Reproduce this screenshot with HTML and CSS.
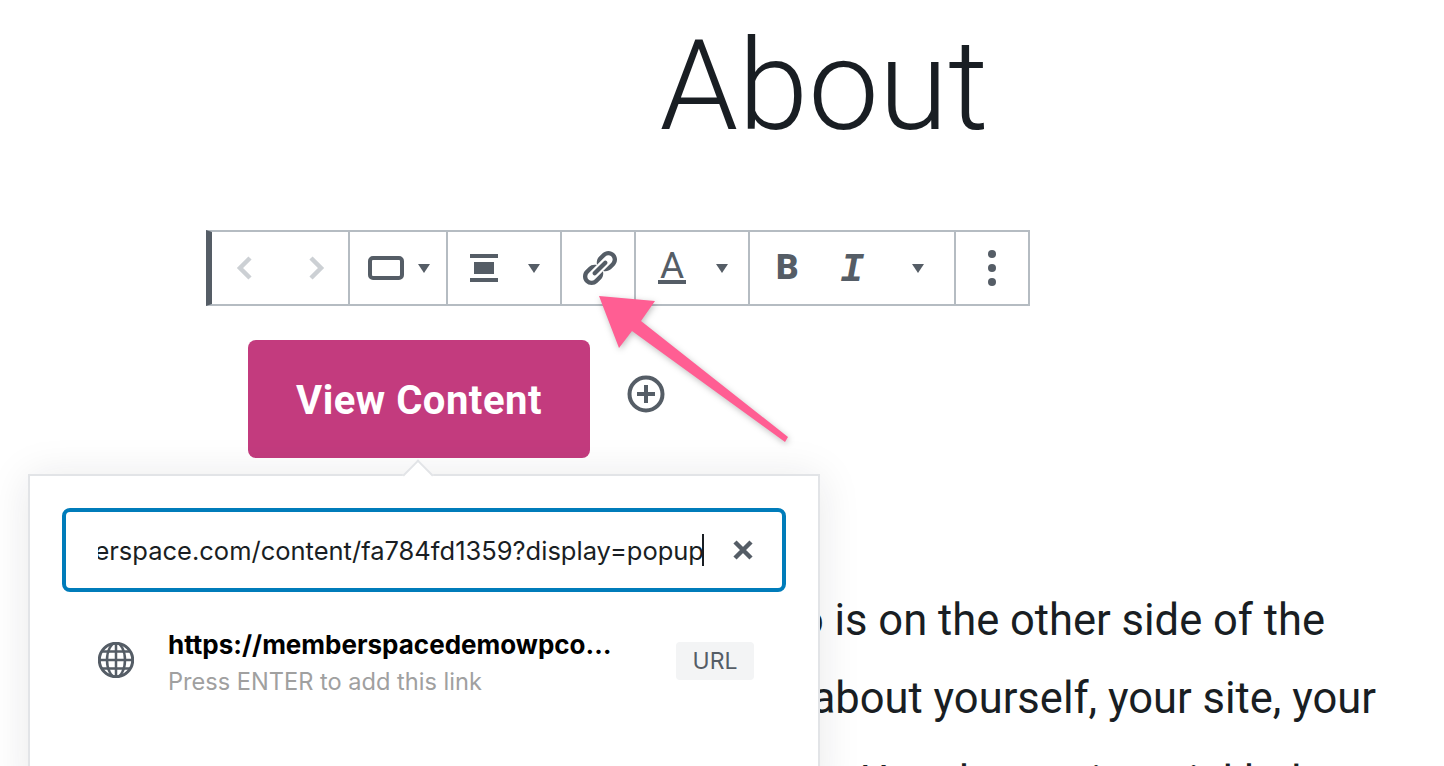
FILE: index.html
```html
<html>
	<head>
		<title>About</title>
		<link rel="stylesheet" href="styles.css">
	</head>
	<body>
		<div class="page">
			<h1 class="title">About</h1>

			<div class="toolbar">
				<div class="group nav">
					<svg class="chevron" width="16" height="24" viewBox="0 0 16 24"><path d="M14 2 4 12l10 10"/></svg>
					<svg class="chevron" width="16" height="24" viewBox="0 0 16 24"><path d="M2 2l10 10L2 22"/></svg>
				</div>
				<div class="group style">
					<svg width="36" height="24" viewBox="0 0 36 24"><rect class="outline" x="2" y="2" width="32" height="20" rx="3"/></svg>
					<span class="caret"></span>
				</div>
				<div class="group align">
					<svg width="28" height="28" viewBox="0 0 28 28"><path class="fill" d="M0 0h28v4H0zM4 8h20v12H4zM0 24h28v4H0z"/></svg>
					<span class="caret"></span>
				</div>
				<div class="group link">
					<svg width="40" height="40" viewBox="0 0 20 20">
						<path class="fill" d="M17.74 2.76c1.68 1.69 1.68 4.41 0 6.1l-1.53 1.52c-1.12 1.12-2.7 1.47-4.14 1.09l2.62-2.61.76-.77.76-.76c.84-.84.84-2.2 0-3.04-.84-.85-2.2-.85-3.04 0l-.77.76-3.38 3.38c-.37-1.44-.02-3.02 1.1-4.14l1.52-1.53c1.69-1.68 4.42-1.68 6.1 0zM8.59 13.43l5.34-5.34c.42-.42.42-1.1 0-1.52-.44-.43-1.13-.39-1.53 0l-5.33 5.34c-.42.42-.42 1.1 0 1.52.44.43 1.13.39 1.52 0zm-.76 2.29l4.14-4.15c.38 1.44.03 3.02-1.09 4.14l-1.52 1.53c-1.69 1.68-4.41 1.68-6.1 0-1.68-1.68-1.68-4.42 0-6.1l1.53-1.52c1.12-1.12 2.7-1.47 4.14-1.1l-4.14 4.15c-.85.84-.85 2.2 0 3.05.84.84 2.2.84 3.04 0z"/>
					</svg>
				</div>
				<div class="group color">
					<span class="letter-a">A</span>
					<span class="caret"></span>
				</div>
				<div class="group format">
					<span class="letter-b">B</span>
					<span class="letter-i">I</span>
					<span class="caret"></span>
				</div>
				<div class="group more">
					<span class="dot"></span>
					<span class="dot"></span>
					<span class="dot"></span>
				</div>
			</div>

			<div class="button-row">
				<a class="view-btn">View Content</a>
				<svg class="plus" width="38" height="38" viewBox="0 0 38 38">
					<circle class="outline" cx="19" cy="19" r="16.5"/>
					<path class="outline" d="M19 10v18M10 19h18"/>
				</svg>
			</div>

			<div class="para">
				<div class="line first">Who is on the other side of the</div>
				<div class="line">Tell readers about yourself, your site, your</div>
				<div class="line third">content. Use the testimonial help</div>
			</div>

			<div class="popover">
				<span class="tip"></span>
				<div class="url-field">
					<div class="url-clip"><span class="url-text">https://memberspace.com/content/fa784fd1359?display=popup</span><span class="cursor"></span></div>
					<svg class="close" width="20" height="20" viewBox="0 0 20 20"><path d="M2 2l16 16M18 2 2 18"/></svg>
				</div>
				<div class="suggestion">
					<svg class="globe" width="36" height="36" viewBox="0 0 36 36">
						<circle cx="18" cy="18" r="16.7"/>
						<ellipse cx="18" cy="18" rx="9" ry="17"/>
						<path d="M18 1v34M1 18h34M4 9.500h28M4 26.500h28"/>
					</svg>
					<div class="sugg-text">
						<div class="sugg-url">https://memberspacedemowpcom.wpcomstaging.com/content</div>
						<div class="sugg-hint">Press ENTER to add this link</div>
					</div>
					<span class="badge">URL</span>
				</div>
			</div>

			<svg class="arrow" width="210" height="170" viewBox="0 0 210 170">
				<path d="M9 6 65 11 51 31 198 147 195 152 42 41 29 58z"/>
			</svg>
		</div>
	</body>
</html>
```

FILE: styles.css
```css
* {
	box-sizing: border-box;
}

body {
	margin: 0;
	background: #fff;
	font-family: "Inter", "Liberation Sans", sans-serif;
}

.page {
	position: relative;
	width: 1444px;
	height: 766px;
	overflow: hidden;
}

.title {
	margin: 0 0 0 272px;
	width: 1104px;
	height: 230px;
	padding-top: 12px;
	font-family: "Roboto", sans-serif;
	font-size: 126px;
	font-weight: 300;
	line-height: 148px;
	text-align: center;
	color: #191e23;
}

/* toolbar */
.toolbar {
	display: flex;
	margin-left: 206px;
	width: 824px;
	height: 76px;
	border: 2px solid #b5bcc2;
	border-left: 6px solid #555d66;
}

.group {
	display: flex;
	align-items: center;
	border-right: 2px solid #b5bcc2;
}

.group:last-child {
	border-right: 0;
}

.nav {
	width: 138px;
	padding-left: 24px;
	gap: 57px;
}

.style {
	width: 98px;
	padding-left: 18px;
	gap: 14px;
}

.align {
	width: 114px;
	padding-left: 22px;
	gap: 30px;
}

.link {
	width: 74px;
	padding-left: 17px;
}

.color {
	width: 114px;
	padding-left: 22px;
	gap: 30px;
}

.format {
	width: 206px;
	padding-left: 26px;
}

.more {
	flex: 1;
	flex-direction: column;
	justify-content: center;
	gap: 6px;
}

.chevron path {
	fill: none;
	stroke: #ccd0d4;
	stroke-width: 4.5;
}

.outline {
	fill: none;
	stroke: #555d66;
	stroke-width: 4;
}

.fill {
	fill: #555d66;
}

.caret {
	width: 0;
	height: 0;
	border-left: 6px solid transparent;
	border-right: 6px solid transparent;
	border-top: 9px solid #555d66;
}

.letter-a {
	width: 28px;
	height: 32px;
	border-bottom: 4px solid #555d66;
	font-family: "Roboto", sans-serif;
	font-size: 37px;
	line-height: 27px;
	text-align: center;
	color: #555d66;
}

.letter-b {
	width: 22px;
	font-family: "Roboto", sans-serif;
	font-size: 35px;
	font-weight: 900;
	line-height: 40px;
	color: #555d66;
}

.letter-i {
	width: 24px;
	height: 40px;
	margin-top: 6px;
	margin-left: 42px;
	margin-right: 48px;
	font-family: "Liberation Mono", monospace;
	font-size: 40px;
	font-weight: 700;
	font-style: italic;
	line-height: 40px;
	color: #555d66;
}

.dot {
	width: 8px;
	height: 8px;
	border-radius: 50%;
	background: #555d66;
}

/* button */
.button-row {
	display: flex;
	align-items: center;
	margin: 34px 0 0 248px;
	height: 118px;
}

.view-btn {
	display: block;
	width: 342px;
	height: 118px;
	border-radius: 8px;
	background: #c33b7e;
	font-family: "Roboto", sans-serif;
	font-size: 40px;
	font-weight: 700;
	letter-spacing: 0.5px;
	line-height: 122px;
	text-align: center;
	color: #fff;
}

.plus {
	margin: -10px 0 0 37px;
}

/* paragraph under the popover */
.para {
	margin: 124px 0 0 272px;
	width: 1104px;
	font-family: "Roboto", sans-serif;
	font-size: 43.500px;
	line-height: 78px;
	color: #191e23;
}

.line {
	text-align: right;
	white-space: nowrap;
}

.first {
	padding-right: 51px;
}

.third {
	padding-top: 6px;
	padding-right: 50px;
}

/* link popover */
.popover {
	position: absolute;
	left: 28px;
	top: 474px;
	width: 792px;
	height: 320px;
	padding: 32px;
	background: #fff;
	border: 2px solid #e2e4e7;
	box-shadow: 0 3px 40px rgba(25, 30, 35, 0.1);
}

.tip {
	position: absolute;
	left: 377px;
	top: -12px;
	width: 22px;
	height: 22px;
	background: #fff;
	border-top: 2px solid #e2e4e7;
	border-left: 2px solid #e2e4e7;
	transform: rotate(45deg);
}

.url-field {
	display: flex;
	align-items: center;
	height: 84px;
	padding: 0 29px 0 32px;
	border: 4px solid #007cba;
	border-radius: 8px;
}

.url-clip {
	display: flex;
	flex: 1;
	justify-content: flex-end;
	align-items: center;
	overflow: hidden;
	margin-right: 29px;
	font-size: 25.500px;
	white-space: nowrap;
	color: #191e23;
}

.url-text {
	flex-shrink: 0;
}

.cursor {
	flex-shrink: 0;
	width: 2px;
	height: 32px;
	margin-left: -2px;
	background: #191e23;
}

.close path {
	fill: none;
	stroke: #555d66;
	stroke-width: 4.5;
}

.suggestion {
	display: flex;
	align-items: center;
	margin-top: 35px;
	padding-left: 36px;
}

.globe {
	flex-shrink: 0;
	margin: 0 34px 8px 0;
}

.globe ellipse,
.globe path {
	fill: none;
	stroke: #555d66;
	stroke-width: 2.500;
}

.globe circle {
	fill: none;
	stroke: #555d66;
	stroke-width: 3;
}

.sugg-text {
	width: 444px;
}

.sugg-url {
	overflow: hidden;
	text-overflow: ellipsis;
	white-space: nowrap;
	font-size: 26px;
	font-weight: 700;
	line-height: 36px;
	color: #000;
}

.sugg-hint {
	font-size: 23.600px;
	line-height: 38px;
	color: #a0a0a0;
}

.badge {
	width: 78px;
	height: 38px;
	margin: 0 0 6px 64px;
	border-radius: 4px;
	background: #f3f4f5;
	font-size: 23px;
	line-height: 38px;
	text-align: center;
	color: #555d66;
}

/* annotation arrow */
.arrow {
	position: absolute;
	left: 590px;
	top: 290px;
	filter: drop-shadow(1px 2px 3px rgba(0, 0, 0, 0.25));
}

.arrow path {
	fill: #ff5e93;
}
```
